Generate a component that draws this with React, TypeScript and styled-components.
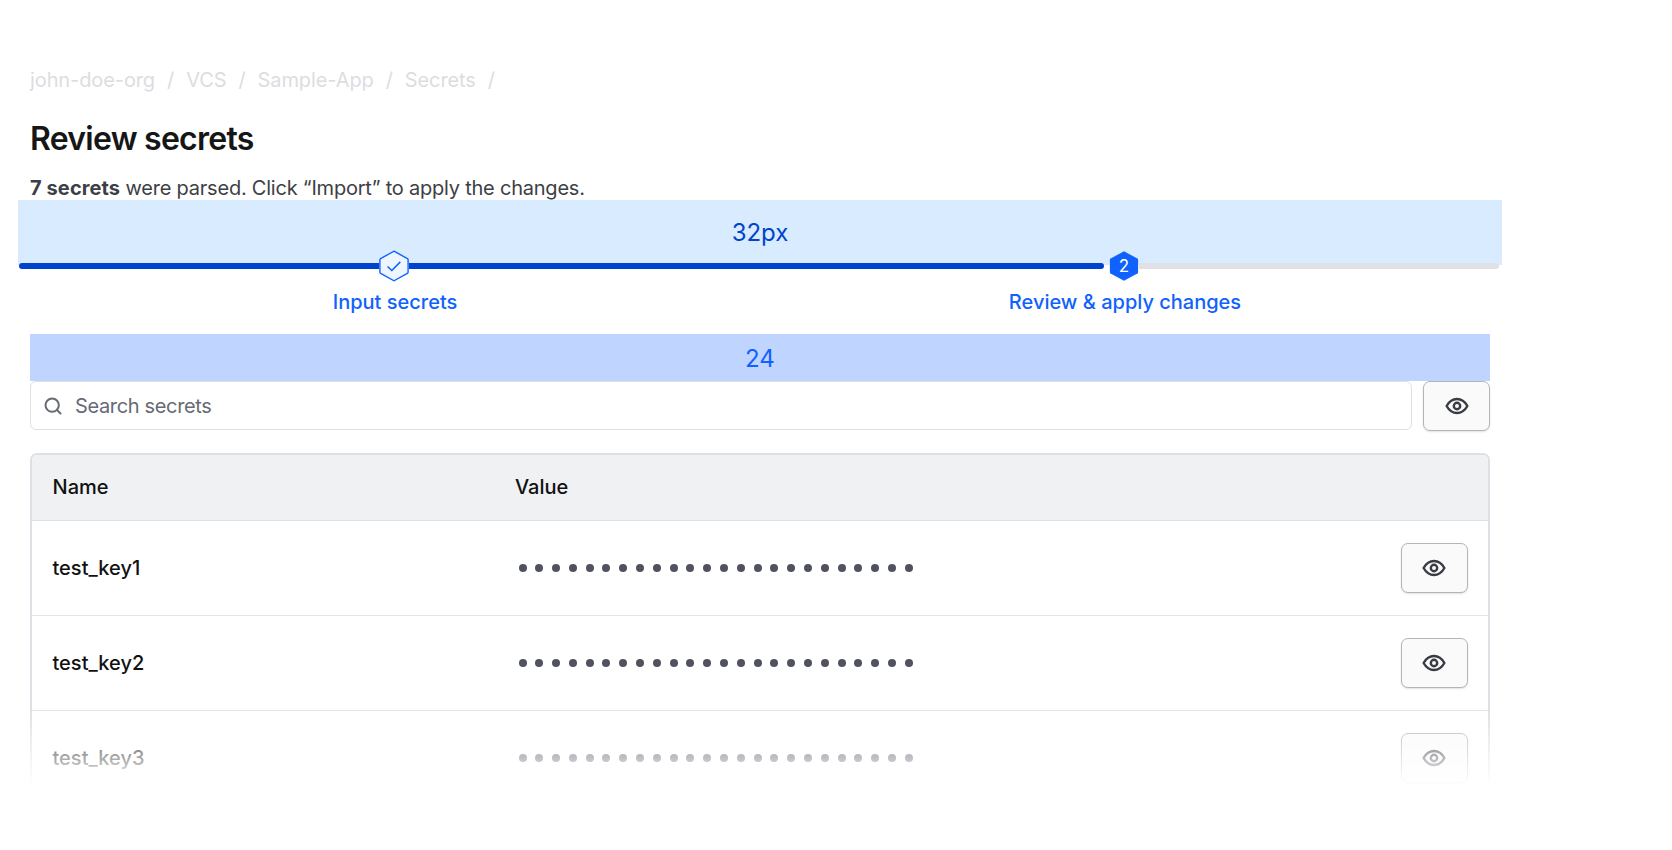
import React from "react";
import styled, { createGlobalStyle } from "styled-components";
import { Search } from "lucide-react";

const Global = createGlobalStyle`
  html, body { margin: 0; padding: 0; background: #fff; }
  body { font-family: Inter, "Liberation Sans", sans-serif; color: #161616; -webkit-font-smoothing: antialiased; }
  * { box-sizing: border-box; }
`;

const Page = styled.main`
  position: relative;
  height: 787px;
  overflow: hidden;
  width: 1520px;
  padding: 68px 30px 0;
`;

const Fade = styled.div`
  position: absolute;
  left: 0;
  right: 0;
  bottom: 0;
  height: 80px;
  background: linear-gradient(to bottom, rgba(255,255,255,0), rgba(255,255,255,0.55) 55%, #fff);
`;

const Breadcrumbs = styled.nav`
  display: flex;
  gap: 12px;
  height: 24px;
  align-items: center;
  font-size: 20px;
  letter-spacing: -0.1px;
  color: #dcdde1;
`;

const Title = styled.h1`
  margin: 25px 0 0;
  height: 44px;
  line-height: 44px;
  font-size: 32px;
  font-weight: 600;
  letter-spacing: -0.75px;
  color: #161616;
`;

const Subtitle = styled.p`
  margin: 15px 0 0;
  height: 25px;
  line-height: 24px;
  font-size: 20px;
  letter-spacing: -0.22px;
  color: #3d3f46;
  b { font-weight: 700; letter-spacing: 0.1px; }
`;

const SpacerBand = styled.div<{ $tone: "light" | "strong" }>`
  display: flex;
  align-items: center;
  justify-content: center;
  font-size: 24px;
  color: ${(p) => (p.$tone === "light" ? "#0043ce" : "#0f62fe")};
  background: ${(p) => (p.$tone === "light" ? "#d9ecff" : "#bfd4ff")};
`;

const TopBand = styled(SpacerBand)`
  height: 65px;
  margin: -1px -12px -1px -12px;
  padding-bottom: 1px;
`;

const GapBand = styled(SpacerBand)`
  height: 47px;
  padding-top: 1px;
`;

const Track = styled.div`
  display: flex;
  align-items: center;
  height: 32px;
  margin: -15px -9px 0 -11px;
  position: relative;
`;

const Segment = styled.div<{ $w?: number; $on?: boolean; $gap?: boolean }>`
  height: 6px;
  flex: ${(p) => (p.$w ? `0 0 ${p.$w}px` : "1")};
  background: ${(p) => (p.$on ? "#0043ce" : "#e0e1e5")};
  border-radius: ${(p) => (p.$gap ? "0 3px 3px 0" : "3px 0 0 3px")};
  margin-right: ${(p) => (p.$gap ? "5px" : "0")};
`;

const TailSegment = styled(Segment)`
  border-radius: 0 3px 3px 0;
`;

const HexNode = styled.svg`
  flex: 0 0 30px;
  width: 30px;
  height: 32px;
  display: block;
`;

const HexText = styled.text`
  font-family: Inter, "Liberation Sans", sans-serif;
  font-size: 17px;
  fill: #fff;
  text-anchor: middle;
`;

const StepLabels = styled.div`
  display: grid;
  grid-template-columns: 1fr 1fr;
  height: 52px;
`;

const StepLabel = styled.div`
  padding-top: 8px;
  line-height: 24px;
  text-align: center;
  font-size: 20px;
  font-weight: 550;
  color: #0f62fe;
`;

const SearchRow = styled.div`
  display: flex;
  gap: 11px;
  height: 49px;
`;

const SearchBox = styled.label`
  flex: 1;
  display: flex;
  align-items: center;
  gap: 12px;
  padding: 0 12px;
  background: #fff;
  border: 1.5px solid #dfe0e5;
  border-radius: 6px;
  color: #666a75;
`;

const SearchInput = styled.input`
  flex: 1;
  border: 0;
  outline: 0;
  padding: 0;
  background: transparent;
  font: 400 20px Inter, "Liberation Sans", sans-serif;
  letter-spacing: -0.35px;
  color: #666a75;
  &::placeholder { color: #666a75; opacity: 1; }
`;

const EyeButton = styled.button`
  flex: 0 0 67px;
  width: 67px;
  height: 50px;
  display: flex;
  align-items: center;
  justify-content: center;
  padding: 0;
  background: #fafafa;
  border: 1.75px solid #b4b5b8;
  border-radius: 7px;
  box-shadow: 0 1px 2px rgba(0,0,0,0.12);
  color: #3a3c44;
`;

const Table = styled.section`
  margin-top: 23px;
  border: 2px solid #dfe0e5;
  border-radius: 7px;
  background: #fff;
`;

const Row = styled.div`
  display: grid;
  grid-template-columns: 462.5px 1fr auto;
  align-items: center;
  height: 95px;
  padding: 0 20.5px;
  border-bottom: 1.5px solid #e3e4e8;
`;

const HeadRow = styled(Row)`
  height: 66px;
  padding-bottom: 2px;
  background: #f0f1f3;
  border-radius: 5px 5px 0 0;
  border-bottom-color: #dfe0e5;
`;

const HeadCell = styled.div`
  font-size: 20px;
  font-weight: 550;
  color: #111;
`;

const KeyCell = styled.div`
  font-size: 20px;
  font-weight: 550;
  color: #111;
`;

const Dots = styled.div`
  display: flex;
  gap: 8.8px;
  padding-left: 3.5px;
`;

const Dot = styled.span`
  width: 8px;
  height: 8px;
  border-radius: 50%;
  background: #50535f;
`;

function Eye() {
  return (
    <svg width="24" height="18" viewBox="0 0 24 18" fill="none" stroke="currentColor" strokeWidth="2.4">
      <path d="M1.6 9C4.2 4.4 7.8 2 12 2s7.8 2.4 10.4 7c-2.6 4.6-6.2 7-10.4 7S4.2 13.6 1.6 9Z" strokeLinejoin="round" />
      <circle cx="12" cy="9" r="3.2" />
    </svg>
  );
}

const HEX = "M15 1.2 28.4 8.6a1.4 1.4 0 0 1 .7 1.2v12.4a1.4 1.4 0 0 1-.7 1.2L15 30.8 1.6 23.4a1.4 1.4 0 0 1-.7-1.2V9.8a1.4 1.4 0 0 1 .7-1.2Z";

const rows = ["test_key1", "test_key2", "test_key3"];
const dots = Array.from({ length: 24 }, (_, i) => i);

export default function App() {
  return (
    <Page>
      <Global />
      <Breadcrumbs>
        <span>john-doe-org</span><span>/</span>
        <span>VCS</span><span>/</span>
        <span>Sample-App</span><span>/</span>
        <span>Secrets</span><span>/</span>
      </Breadcrumbs>
      <Title>Review secrets</Title>
      <Subtitle><b>7 secrets</b> were parsed. Click “Import” to apply the changes.</Subtitle>
      <TopBand $tone="light">32px</TopBand>
      <Track>
        <Segment $w={360} $on />
        <HexNode viewBox="0 0 30 32">
          <path d={HEX} fill="#edf5ff" stroke="#0f62fe" strokeWidth="1.4" />
          <path d="M8.5 16.5l4.3 4 8.5-8.6" fill="none" stroke="#0f62fe" strokeWidth="1.5" />
        </HexNode>
        <Segment $w={695} $on $gap />
        <HexNode viewBox="0 0 30 32">
          <path d={HEX} fill="#0f62fe" />
          <HexText x="15" y="22">2</HexText>
        </HexNode>
        <TailSegment />
      </Track>
      <StepLabels>
        <StepLabel>Input secrets</StepLabel>
        <StepLabel>Review &amp; apply changes</StepLabel>
      </StepLabels>
      <GapBand $tone="strong">24</GapBand>
      <SearchRow>
        <SearchBox>
          <Search size={20} strokeWidth={2.4} />
          <SearchInput placeholder="Search secrets" />
        </SearchBox>
        <EyeButton aria-label="Show all"><Eye /></EyeButton>
      </SearchRow>
      <Table>
        <HeadRow>
          <HeadCell>Name</HeadCell>
          <HeadCell>Value</HeadCell>
        </HeadRow>
        {rows.map((r) => (
          <Row key={r}>
            <KeyCell>{r}</KeyCell>
            <Dots>{dots.map((d) => <Dot key={d} />)}</Dots>
            <EyeButton aria-label={`Show ${r}`}><Eye /></EyeButton>
          </Row>
        ))}
      </Table>
      <Fade />
    </Page>
  );
}
